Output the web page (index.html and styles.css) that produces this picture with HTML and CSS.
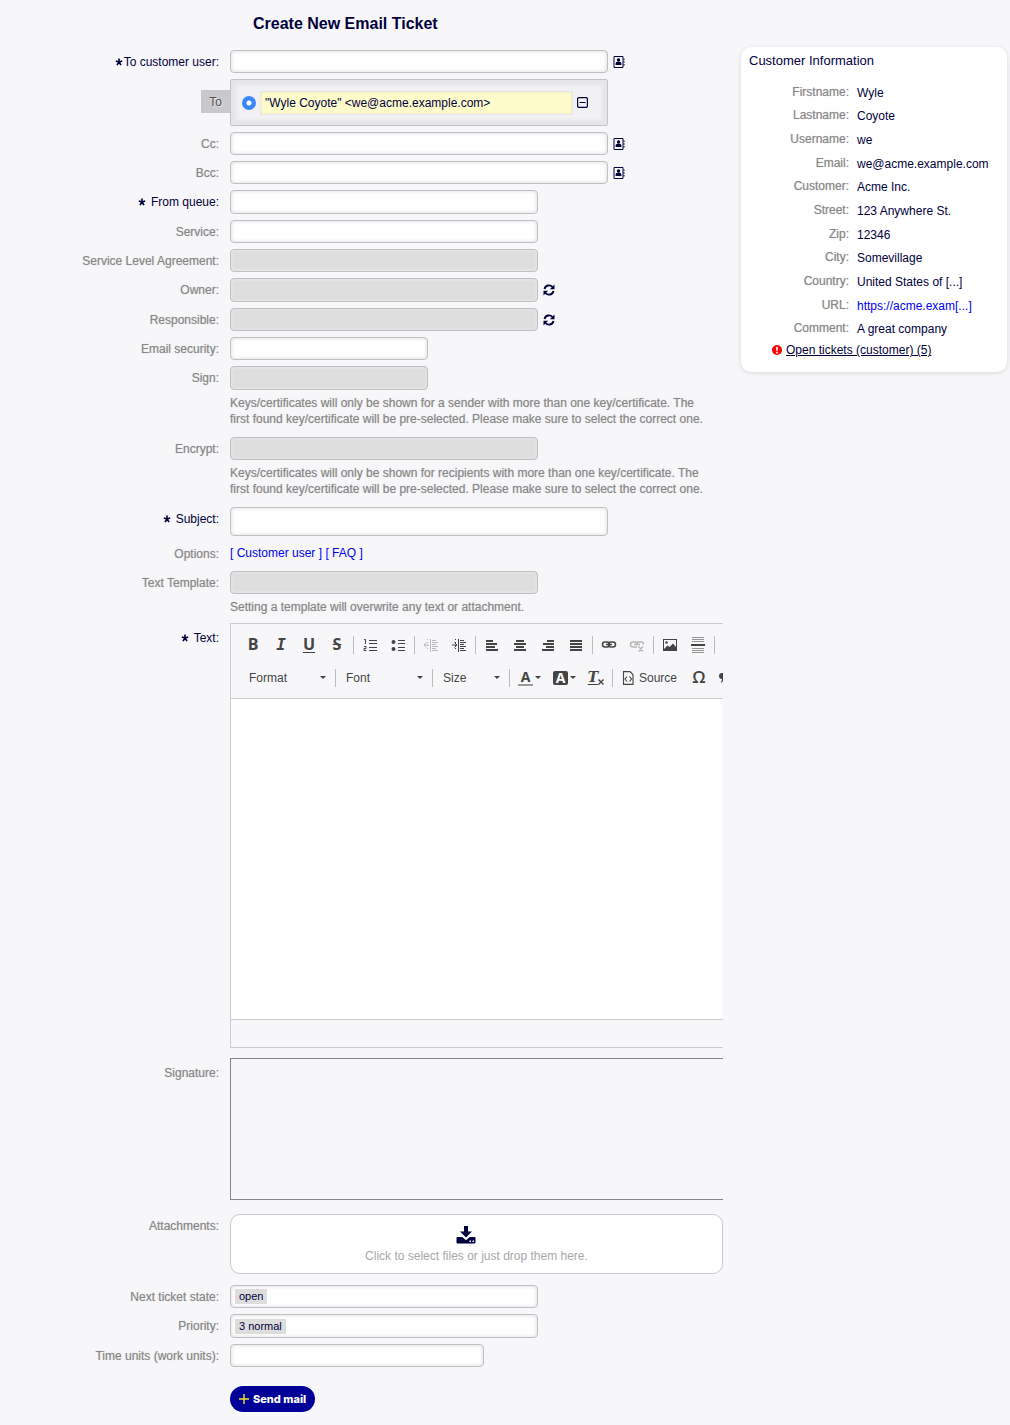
FILE: index.html
```html
<!DOCTYPE html>
<html lang="en">
<head>
<meta charset="utf-8">
<meta name="viewport" content="width=device-width, initial-scale=1">
<title>Create New Email Ticket</title>
<link rel="stylesheet" href="styles.css">
</head>
<body>
<svg class="sprite" aria-hidden="true">
  <symbol id="star" viewBox="0 0 8 8"><path d="M4 4V.6M4 4L.8 3M4 4L7.2 3M4 4L2 7.2M4 4L6 7.2" stroke="currentColor" stroke-width="1.6"/></symbol>
  <symbol id="book" viewBox="0 0 12 14"><path d="M1 1.500h9v11h-9z" fill="none" stroke="currentColor" stroke-width="1"/><circle cx="5.500" cy="5" r="1.700" fill="currentColor"/><path d="M2.600 10V8.400Q2.600 6.800 4.200 6.800h2.600Q8.400 6.800 8.400 8.400V10zM10.500 3.500h1v1.500h-1zM10.500 6.200h1v1.500h-1zM10.500 9h1v1.500h-1z" fill="currentColor"/></symbol>
  <symbol id="refresh" viewBox="0 0 12 12"><path d="M1.500 5A4.600 4.600 0 0 1 9.500 3M10.500 7A4.600 4.600 0 0 1 2.500 9" fill="none" stroke="currentColor" stroke-width="1.900"/><path d="M11.500.6v4.600H6.900zM.5 11.400V6.800h4.600z" fill="currentColor"/></symbol>
</svg>

<div class="page">
  <main class="main">
    <h1 class="title">Create New Email Ticket</h1>
    <form class="form">
      <div class="row">
        <label class="label required" for="customer"><svg class="star star-near"><use href="#star"/></svg>To customer user:</label>
        <div class="control"><input class="field wide" id="customer" type="text"><button class="icon-btn" type="button" aria-label="Customer address book"><svg class="book"><use href="#book"/></svg></button></div>
      </div>
      <div class="row">
        <div class="label-cell"><label class="to-tag" for="to">To</label></div>
        <div class="to-box wide">
          <input class="radio" type="radio" name="primary" aria-label="Main customer" checked>
          <input class="to-input" id="to" type="text" value="&quot;Wyle Coyote&quot; &lt;we@acme.example.com&gt;" readonly>
          <button class="remove" type="button" aria-label="Remove"><svg width="11" height="11" viewBox="0 0 11 11"><path d="M1.500.6h8l.9.9v8l-.9.9h-8l-.9-.9v-8zM2.500 5.500h6" fill="none" stroke="currentColor" stroke-width="1.200"/></svg></button>
        </div>
      </div>
      <div class="row">
        <label class="label" for="cc">Cc:</label>
        <div class="control"><input class="field wide" id="cc" type="text"><button class="icon-btn" type="button" aria-label="Cc address book"><svg class="book"><use href="#book"/></svg></button></div>
      </div>
      <div class="row">
        <label class="label" for="bcc">Bcc:</label>
        <div class="control"><input class="field wide" id="bcc" type="text"><button class="icon-btn" type="button" aria-label="Bcc address book"><svg class="book"><use href="#book"/></svg></button></div>
      </div>
      <div class="row">
        <label class="label required" for="queue"><svg class="star"><use href="#star"/></svg>From queue:</label>
        <div class="control"><select class="field tall medium" id="queue"><option></option></select></div>
      </div>
      <div class="row">
        <label class="label" for="service">Service:</label>
        <div class="control"><select class="field medium" id="service"><option></option></select></div>
      </div>
      <div class="row">
        <label class="label" for="sla">Service Level Agreement:</label>
        <div class="control"><select class="field medium" id="sla" disabled><option></option></select></div>
      </div>
      <div class="row">
        <label class="label" for="owner">Owner:</label>
        <div class="control"><select class="field tall medium" id="owner" disabled><option></option></select><button class="icon-btn" type="button" aria-label="Refresh owners"><svg class="refresh"><use href="#refresh"/></svg></button></div>
      </div>
      <div class="row">
        <label class="label" for="responsible">Responsible:</label>
        <div class="control"><select class="field medium" id="responsible" disabled><option></option></select><button class="icon-btn" type="button" aria-label="Refresh responsibles"><svg class="refresh"><use href="#refresh"/></svg></button></div>
      </div>
      <div class="row">
        <label class="label" for="security">Email security:</label>
        <div class="control"><select class="field small" id="security"><option></option></select></div>
      </div>
      <div class="row">
        <label class="label" for="sign">Sign:</label>
        <div>
          <div class="control"><select class="field tall small" id="sign" disabled><option></option></select></div>
          <p class="hint">Keys/certificates will only be shown for a sender with more than one key/certificate. The first found key/certificate will be pre-selected. Please make sure to select the correct one.</p>
        </div>
      </div>
      <div class="row after-hint">
        <label class="label" for="encrypt">Encrypt:</label>
        <div>
          <div class="control"><select class="field medium" id="encrypt" disabled><option></option></select></div>
          <p class="hint">Keys/certificates will only be shown for recipients with more than one key/certificate. The first found key/certificate will be pre-selected. Please make sure to select the correct one.</p>
        </div>
      </div>
      <div class="row after-hint">
        <label class="label required" for="subject"><svg class="star"><use href="#star"/></svg>Subject:</label>
        <div class="control"><input class="field large wide" id="subject" type="text"></div>
      </div>
      <div class="row">
        <span class="label">Options:</span>
        <div class="options"><a href="#customer-user">[ Customer user ]</a> <a href="#faq">[ FAQ ]</a></div>
      </div>
      <div class="row">
        <label class="label" for="template">Text Template:</label>
        <div>
          <div class="control"><select class="field medium" id="template" disabled><option></option></select></div>
          <p class="hint">Setting a template will overwrite any text or attachment.</p>
        </div>
      </div>

      <div class="row editor-row">
        <label class="label block-label required" for="body"><svg class="star"><use href="#star"/></svg>Text:</label>
        <div class="editor">
          <div class="toolbar">
            <div class="tools">
              <button class="tool bold" type="button">B</button>
              <button class="tool italic" type="button">I</button>
              <button class="tool underline" type="button">U</button>
              <button class="tool strike" type="button">S</button>
              <span class="sep"></span>
              <button class="tool" type="button" aria-label="Numbered list"><svg class="glyph" viewBox="0 0 16 16"><path d="M7 3.500h8M7 6.500h8M7 10.500h8M7 13.500h8" stroke-width="1"/><path d="M2 2.500h1.500v4.500M2 9.500h2v2h-2v2h2.500" stroke-width="1"/></svg></button>
              <button class="tool" type="button" aria-label="Bulleted list"><svg class="glyph" viewBox="0 0 16 16"><path d="M8 3.500h7M8 6.500h7M8 10.500h7M8 13.500h7" stroke-width="1"/><circle class="solid" cx="3.500" cy="5" r="2"/><circle class="solid" cx="3.500" cy="12" r="2"/></svg></button>
              <span class="sep"></span>
              <button class="tool" type="button" aria-label="Decrease indent" disabled><svg class="glyph" viewBox="0 0 16 16"><path d="M7.500 2v13M9 3.500h4M9 5.500h6M9 7.500h4M9 9.500h6M9 11.500h4M9 13.500h6M1 8h5M3.500 5.500L1 8l2.500 2.500"/><path d="M4.500 2v12" stroke-dasharray="1 2"/></svg></button>
              <button class="tool" type="button" aria-label="Increase indent"><svg class="glyph" viewBox="0 0 16 16"><path d="M7.500 2v13M9 3.500h4M9 5.500h6M9 7.500h4M9 9.500h6M9 11.500h4M9 13.500h6M1 8h5M3.500 5.500L6 8l-2.500 2.500"/><path d="M4.500 2v12" stroke-dasharray="1 2"/></svg></button>
              <span class="sep"></span>
              <button class="tool" type="button" aria-label="Align left"><svg class="glyph" viewBox="0 0 16 16"><path d="M2 4h7M2 7h11M2 10h9M2 13h12" stroke-width="2"/></svg></button>
              <button class="tool" type="button" aria-label="Centre"><svg class="glyph" viewBox="0 0 16 16"><path d="M4 4h8M2 7h12M4 10h8M2 13h12" stroke-width="2"/></svg></button>
              <button class="tool" type="button" aria-label="Align right"><svg class="glyph" viewBox="0 0 16 16"><path d="M7 4h7M3 7h11M6 10h8M2 13h12" stroke-width="2"/></svg></button>
              <button class="tool" type="button" aria-label="Justify"><svg class="glyph" viewBox="0 0 16 16"><path d="M2 4h12M2 7h12M2 10h12M2 13h12" stroke-width="2"/></svg></button>
              <span class="sep"></span>
              <button class="tool" type="button" aria-label="Link"><svg class="glyph" viewBox="0 0 16 16"><rect x="1.500" y="5" width="7" height="5" rx="2.500" stroke-width="1.500"/><rect x="7.500" y="5" width="7" height="5" rx="2.500" stroke-width="1.500"/><path d="M5 7.500h6" stroke-width="1.500"/></svg></button>
              <button class="tool" type="button" aria-label="Unlink" disabled><svg class="glyph" viewBox="0 0 16 16"><path d="M8 10H4Q1.500 10 1.500 7.500T4 5h2q2.500 0 2.500 2.500M8 5h4q2.500 0 2.500 2.500M5 7.500h6M9.500 9.500l4.500 5M14 9.500l-4.500 5" stroke-width="1.500"/></svg></button>
              <span class="sep"></span>
              <button class="tool" type="button" aria-label="Image"><svg class="glyph" viewBox="0 0 16 16"><rect x="1.500" y="2.500" width="13" height="11" stroke-width="1"/><circle class="solid" cx="4.500" cy="5.500" r="1.300"/><path class="solid" d="M2 12l3.500-3.500 2 1.500L11 6.500l3 3.500v3H2z"/></svg></button>
              <button class="tool" type="button" aria-label="Horizontal line"><svg class="glyph" viewBox="0 0 16 16"><path d="M2 .5h12M2 2.500h12M2 4.500h12M2 11.500h12M2 13.500h12M2 15.500h12" opacity=".55"/><path d="M1 8h14" stroke-width="2"/></svg></button>
              <span class="sep"></span>
            </div>
            <div class="tools tools-second">
              <button class="combo" type="button">Format<span class="caret"></span></button>
              <span class="sep"></span>
              <button class="combo" type="button">Font<span class="caret"></span></button>
              <span class="sep"></span>
              <button class="combo combo-short" type="button">Size<span class="caret"></span></button>
              <span class="sep"></span>
              <button class="tool color" type="button"><span class="letter letter-line">A</span><span class="caret"></span></button>
              <button class="tool color" type="button"><span class="letter letter-box">A</span><span class="caret"></span></button>
              <button class="tool clear-format" type="button" aria-label="Remove format"><span class="clear-t">T</span><svg width="6" height="6" viewBox="0 0 6 6"><path d="M.5.5l5 5M5.500.5l-5 5" stroke="currentColor" stroke-width="1.400"/></svg></button>
              <span class="sep"></span>
              <button class="source" type="button"><svg width="12" height="14" viewBox="0 0 12 14"><path d="M1.500.6h6.500l3 3v9.800H1.500zM5 5.500L3 8l2 2.500M7.500 5.500L9.500 8l-2 2.500" fill="none" stroke="currentColor" stroke-width="1.100"/></svg>Source</button>
              <button class="tool omega" type="button">Ω</button>
              <button class="tool" type="button" aria-label="Block quote"><svg class="glyph" viewBox="0 0 16 16"><path class="solid" d="M3 3q3 0 3 3.500 0 4-4.500 6.500 1.500-2 1.500-4Q0 9 0 6t3-3zM11 3q3 0 3 3.500 0 4-4.500 6.500 1.500-2 1.500-4-3 0-3-3t3-3z"/></svg></button>
            </div>
          </div>
          <textarea class="body" id="body"></textarea>
          <div class="statusbar"></div>
        </div>
      </div>

      <div class="row signature-row">
        <label class="label block-label" for="signature">Signature:</label>
        <textarea class="signature" id="signature" readonly></textarea>
      </div>
      <div class="row files-row">
        <label class="label" for="files">Attachments:</label>
        <label class="drop">
          <input class="file" id="files" type="file" multiple>
          <svg class="drop-icon" viewBox="0 0 20 18"><path d="M8 0h4v5.500h4L10 11.500 4 5.500h4z" fill="currentColor"/><path d="M1.500 11h4.800L10 14.300 13.700 11h4.800q1 0 1 1v4.500q0 1-1 1h-17q-1 0-1-1V12q0-1 1-1z" fill="currentColor"/><path d="M13.500 14.500h1.500V16h-1.500zM16.500 14.500H18V16h-1.500z" fill="#fff"/></svg>
          <span>Click to select files or just drop them here.</span>
        </label>
      </div>
      <div class="row">
        <label class="label" for="state">Next ticket state:</label>
        <div class="field medium chips"><span class="chip">open</span><input class="chip-input" id="state" type="text"></div>
      </div>
      <div class="row">
        <label class="label" for="priority">Priority:</label>
        <div class="field tall medium chips"><span class="chip">3 normal</span><input class="chip-input" id="priority" type="text"></div>
      </div>
      <div class="row">
        <label class="label" for="time">Time units (work units):</label>
        <div class="control"><input class="field time" id="time" type="text"></div>
      </div>
      <div class="row submit-row">
        <span></span>
        <div class="control"><button class="send" type="submit"><svg width="10" height="10" viewBox="0 0 10 10"><path d="M5 0v10M0 5h10" stroke="#f5e62a" stroke-width="1.400"/></svg>Send mail</button></div>
      </div>
    </form>
  </main>

  <aside class="card">
    <h2 class="card-title">Customer Information</h2>
    <dl class="facts">
      <dt>Firstname:</dt><dd>Wyle</dd>
      <dt>Lastname:</dt><dd>Coyote</dd>
      <dt>Username:</dt><dd>we</dd>
      <dt>Email:</dt><dd>we@acme.example.com</dd>
      <dt>Customer:</dt><dd>Acme Inc.</dd>
      <dt>Street:</dt><dd>123 Anywhere St.</dd>
      <dt>Zip:</dt><dd>12346</dd>
      <dt>City:</dt><dd>Somevillage</dd>
      <dt>Country:</dt><dd>United States of [...]</dd>
      <dt>URL:</dt><dd><a href="#url">https://acme.exam[...]</a></dd>
      <dt>Comment:</dt><dd>A great company</dd>
    </dl>
    <div class="tickets">
      <svg width="10" height="10" viewBox="0 0 10 10"><circle cx="5" cy="5" r="5" fill="#f00"/><path d="M5 1.800v4M5 6.800v1.600" stroke="#fff" stroke-width="1.600"/></svg>
      <a href="#tickets">Open tickets (customer) (5)</a>
    </div>
  </aside>
</div>
</body>
</html>
```
FILE: styles.css
```css
* { box-sizing: border-box; }

body {
  margin: 0;
  background: #f7f7f9;
  color: #00003c;
  font-family: "Liberation Sans", Arial, sans-serif;
  font-size: 12px;
  line-height: 16px;
}

button, input, select, textarea { font: inherit; color: inherit; margin: 0; }
button { padding: 0; border: 0; background: none; cursor: pointer; }
a { color: #0000f0; text-decoration: none; }
svg { flex: none; }
.sprite { display: none; }

.page {
  display: grid;
  grid-template-columns: minmax(0, 1fr) 266px;
  gap: 18px;
  align-items: start;
  padding-right: 3px;
}

.title {
  margin: 0;
  padding: 12px 0 14px 253px;
  font-size: 16px;
  line-height: 24px;
}

/* Form rows */
.form { padding-bottom: 7px; }
.row {
  display: grid;
  grid-template-columns: 219px minmax(0, 1fr);
  column-gap: 11px;
  align-items: start;
  margin-bottom: 6px;
}
.label {
  display: flex;
  justify-content: flex-end;
  align-items: center;
  padding-top: 1px;
  line-height: 22px;
  color: #888;
  text-shadow: 0 0 1px #bbb;
}
.required { color: #00003c; text-shadow: none; }
.block-label { padding-top: 4px; }
.star { width: 8px; height: 8px; margin-right: 5px; }
.star-near { margin-right: 1px; }

.control { display: flex; align-items: center; gap: 5px; }
.field {
  display: block;
  height: 23px;
  max-width: 100%;
  padding: 0 4px;
  border: 1px solid #c0c0c2;
  border-radius: 4px;
  background: #fff;
  box-shadow: inset 0 0 4px #d8d8dc;
  appearance: none;
}
.field:disabled { background: #ddd; box-shadow: inset 0 0 2px 2px #e4e4e4; opacity: 1; }
.tall { height: 24px; }
.large { height: 29px; }
.wide { width: 378px; }
.medium { width: 308px; }
.small { width: 198px; }
.time { width: 254px; }

.icon-btn { display: flex; }
.book { width: 12px; height: 14px; }
.refresh { width: 12px; height: 12px; }

.label-cell { display: flex; justify-content: flex-end; margin-right: -11px; padding-top: 11px; }
.to-tag {
  width: 29px;
  height: 23px;
  background: #c9c9cb;
  color: #555;
  line-height: 24px;
  text-align: center;
  text-shadow: 1px 1px 1px #eee;
}
.to-box {
  display: flex;
  align-items: center;
  gap: 4px;
  height: 47px;
  max-width: 100%;
  padding: 0 19px 0 11px;
  border: 1px solid #c4c4c6;
  border-radius: 2px;
  background: #f1f1f3;
  box-shadow: inset 0 0 3px 5px #e6e6e8;
}
.radio {
  flex: none;
  width: 14px;
  height: 14px;
  appearance: none;
  border-radius: 50%;
  background: radial-gradient(circle, #fff 2px, #3b86fb 3px);
}
.to-input {
  flex: 1;
  min-width: 0;
  height: 24px;
  padding: 0 4px;
  border: 1px solid #e6e6ea;
  background: #fffccc;
  box-shadow: inset 0 0 3px #e4e2c4;
}
.remove { display: flex; }

.hint {
  margin: 5px 0 8px;
  padding-right: 12px;
  color: #888;
  text-shadow: 0 0 1px #bbb;
}
.row:has(.hint) { margin-bottom: 0; }
.after-hint { padding-top: 2px; }
.options { line-height: 23px; }

/* Rich text editor */
.editor-row { margin-bottom: 10px; }
.editor {
  overflow: hidden;
  border: solid #ccccce;
  border-width: 1px 0 1px 1px;
  color: #444;
}
.toolbar { padding: 4px 0; border-bottom: 1px solid #ccccce; }
.tools { display: flex; align-items: center; height: 33px; padding-left: 8px; }
.tools-second { padding-left: 10px; }
.tool { display: flex; flex: none; align-items: center; justify-content: center; width: 28px; height: 24px; }
.tool:disabled { color: #b8b8b8; }
.glyph { width: 16px; height: 16px; fill: none; stroke: currentColor; }
.solid { fill: currentColor; stroke: none; }
.sep { flex: none; width: 1px; height: 18px; margin: 0 2px; background: #bcbcbc; }
.bold, .underline, .strike { padding-bottom: 2px; font: bold 16px/22px "Open Sans", sans-serif; }
.italic { font: italic bold 16px/24px "DejaVu Sans Mono", monospace; }
.underline { text-decoration: underline 1px; text-underline-offset: 2px; }
.strike { text-decoration: line-through 1px; }
.combo {
  display: flex;
  flex: none;
  align-items: center;
  justify-content: space-between;
  width: 92px;
  height: 24px;
  padding: 0 7px 0 8px;
}
.combo-short { width: 72px; }
.caret { border: solid transparent; border-width: 3px 3px 0; border-top-color: #444; }
.color { gap: 2px; width: 35px; }
.letter { width: 15px; font: bold 14px/14px "Open Sans", sans-serif; text-align: center; }
.letter-line { border-bottom: 2px solid #999; }
.letter-box { border-radius: 2px; background: #444; color: #fff; }
.clear-format { align-items: flex-end; padding-bottom: 5px; }
.clear-t { font: italic bold 14px/16px "DejaVu Serif", serif; text-decoration: underline 1px; text-underline-offset: 2px; }
.source { display: flex; flex: none; align-items: center; gap: 5px; width: 70px; height: 24px; padding-left: 7px; }
.omega { padding-bottom: 2px; font: 600 17px/22px "Open Sans", sans-serif; }
.body {
  display: block;
  width: 100%;
  height: 320px;
  border: 0;
  background: #fff;
  resize: none;
}
.statusbar { height: 28px; border-top: 1px solid #ccccce; }

.signature-row { margin-bottom: 14px; }
.signature {
  display: block;
  width: 100%;
  height: 142px;
  border: solid #85858a;
  border-width: 1px 0 1px 1px;
  background: transparent;
  resize: none;
}

.files-row { margin-bottom: 11px; }
.drop {
  display: flex;
  flex-direction: column;
  align-items: center;
  gap: 4px;
  height: 60px;
  padding-top: 11px;
  border: 1px solid #c8c8ca;
  border-radius: 10px;
  background: #fff;
}
.drop-icon { width: 20px; height: 18px; margin-right: 22px; }
.drop span { color: #a8a8a8; }
.file { position: absolute; width: 1px; height: 1px; opacity: 0; }

.chips { display: flex; align-items: center; }
.chip { flex: none; padding: 0 4px; background: #ddd; font-size: 11px; line-height: 15px; }
.chip-input { flex: 1; min-width: 0; height: 15px; padding: 0; border: 0; background: none; outline: 0; }

.submit-row { padding-top: 13px; }
.send {
  display: flex;
  align-items: center;
  gap: 4px;
  height: 26px;
  padding: 0 9px;
  border-radius: 13px;
  background: #000099;
  color: #fff;
  font: 800 11px/26px Inter, sans-serif;
}

/* Customer card */
.card {
  margin-top: 47px;
  padding: 6px 8px 14px;
  border-radius: 10px;
  background: #fff;
  box-shadow: 0 1px 4px #d8d8dc;
}
.card-title { margin: 0; font-size: 13px; font-weight: 400; }
.facts {
  display: grid;
  grid-template-columns: 100px minmax(0, 1fr);
  grid-auto-rows: 1fr;
  column-gap: 8px;
  align-items: center;
  min-height: 260px;
  margin: 11px 0 0;
}
.facts dt { color: #888; text-align: right; text-shadow: 0 0 1px #bbb; }
.facts dd { margin: 0; padding-top: 2px; white-space: nowrap; }
.tickets { display: flex; align-items: center; gap: 4px; margin-top: 2px; padding-left: 23px; }
.tickets a { color: #00003c; text-decoration: underline; }
```
